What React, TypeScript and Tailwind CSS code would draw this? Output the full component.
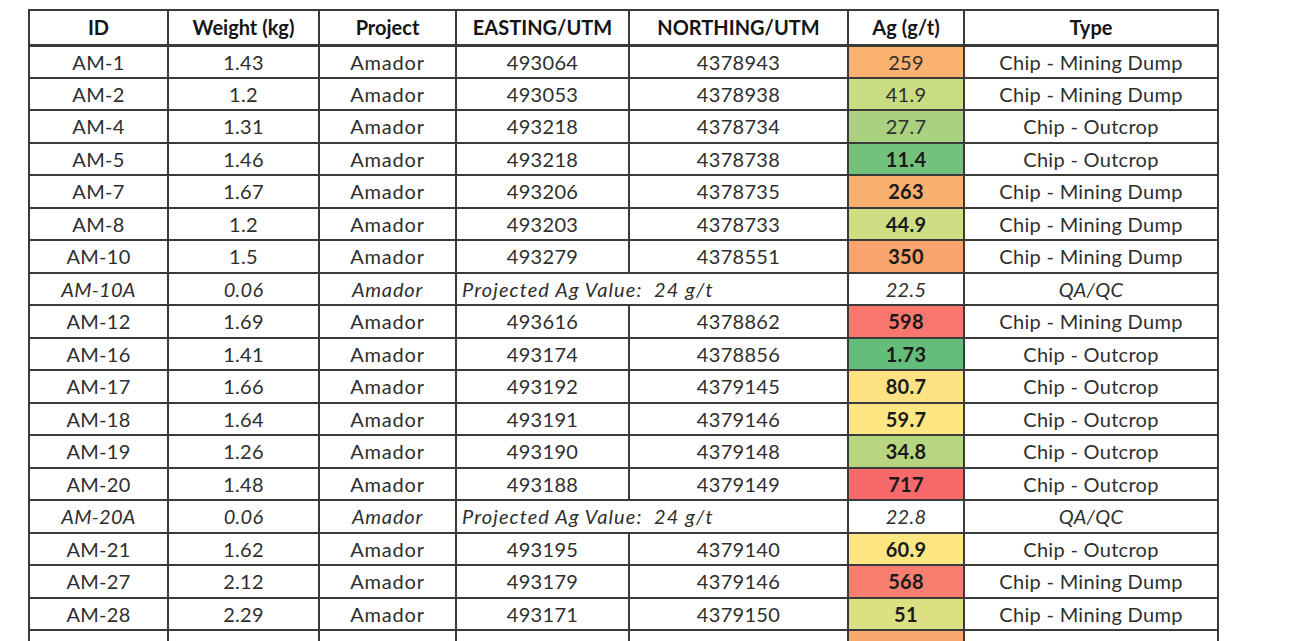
type Row = {
  id: string;
  weight: string;
  easting?: string;
  northing?: string;
  ag: string;
  agBg: string;
  bold?: boolean;
  type: string;
  qa?: boolean;
};

const rows: Row[] = [
  { id: "AM-1", weight: "1.43", easting: "493064", northing: "4378943", ag: "259", agBg: "bg-[#f9b26f]", type: "Chip - Mining Dump" },
  { id: "AM-2", weight: "1.2", easting: "493053", northing: "4378938", ag: "41.9", agBg: "bg-[#c9dc81]", type: "Chip - Mining Dump" },
  { id: "AM-4", weight: "1.31", easting: "493218", northing: "4378734", ag: "27.7", agBg: "bg-[#a9d17f]", type: "Chip - Outcrop" },
  { id: "AM-5", weight: "1.46", easting: "493218", northing: "4378738", ag: "11.4", agBg: "bg-[#74c17c]", bold: true, type: "Chip - Outcrop" },
  { id: "AM-7", weight: "1.67", easting: "493206", northing: "4378735", ag: "263", agBg: "bg-[#f9af6f]", bold: true, type: "Chip - Mining Dump" },
  { id: "AM-8", weight: "1.2", easting: "493203", northing: "4378733", ag: "44.9", agBg: "bg-[#cfde82]", bold: true, type: "Chip - Mining Dump" },
  { id: "AM-10", weight: "1.5", easting: "493279", northing: "4378551", ag: "350", agBg: "bg-[#f9a46d]", bold: true, type: "Chip - Mining Dump" },
  { id: "AM-10A", weight: "0.06", ag: "22.5", agBg: "bg-white", type: "QA/QC", qa: true },
  { id: "AM-12", weight: "1.69", easting: "493616", northing: "4378862", ag: "598", agBg: "bg-[#f8776e]", bold: true, type: "Chip - Mining Dump" },
  { id: "AM-16", weight: "1.41", easting: "493174", northing: "4378856", ag: "1.73", agBg: "bg-[#64be7b]", bold: true, type: "Chip - Outcrop" },
  { id: "AM-17", weight: "1.66", easting: "493192", northing: "4379145", ag: "80.7", agBg: "bg-[#fee282]", bold: true, type: "Chip - Outcrop" },
  { id: "AM-18", weight: "1.64", easting: "493191", northing: "4379146", ag: "59.7", agBg: "bg-[#fee783]", bold: true, type: "Chip - Outcrop" },
  { id: "AM-19", weight: "1.26", easting: "493190", northing: "4379148", ag: "34.8", agBg: "bg-[#b7d67f]", bold: true, type: "Chip - Outcrop" },
  { id: "AM-20", weight: "1.48", easting: "493188", northing: "4379149", ag: "717", agBg: "bg-[#f8696b]", bold: true, type: "Chip - Outcrop" },
  { id: "AM-20A", weight: "0.06", ag: "22.8", agBg: "bg-white", type: "QA/QC", qa: true },
  { id: "AM-21", weight: "1.62", easting: "493195", northing: "4379140", ag: "60.9", agBg: "bg-[#fee683]", bold: true, type: "Chip - Outcrop" },
  { id: "AM-27", weight: "2.12", easting: "493179", northing: "4379146", ag: "568", agBg: "bg-[#f87f6f]", bold: true, type: "Chip - Mining Dump" },
  { id: "AM-28", weight: "2.29", easting: "493171", northing: "4379150", ag: "51", agBg: "bg-[#dcdf82]", bold: true, type: "Chip - Mining Dump" },
];

const cell = "border-2 border-[#3a3a3a] p-0 text-center align-middle";

export default function App() {
  return (
    <div className="h-[641px] overflow-hidden bg-white pl-[28px] pt-[9px] font-['Lato',sans-serif] text-[20px] leading-none tracking-[0.3px] text-[#2e2e2e]">
      <table className="w-[1189px] table-fixed border-collapse">
        <colgroup>
          <col className="w-[139px]" />
          <col className="w-[151px]" />
          <col className="w-[137px]" />
          <col className="w-[173px]" />
          <col className="w-[219px]" />
          <col className="w-[116px]" />
          <col className="w-[254px]" />
        </colgroup>
        <thead>
          <tr className="h-[35px] font-bold tracking-normal text-[#151515]">
            <th className={`${cell} border-b-[3px]`}>ID</th>
            <th className={`${cell} border-b-[3px]`}>Weight (kg)</th>
            <th className={`${cell} border-b-[3px]`}>Project</th>
            <th className={`${cell} border-b-[3px]`}>EASTING/UTM</th>
            <th className={`${cell} border-b-[3px]`}>NORTHING/UTM</th>
            <th className={`${cell} border-b-[3px]`}>Ag (g/t)</th>
            <th className={`${cell} border-b-[3px]`}>Type</th>
          </tr>
        </thead>
        <tbody>
          {rows.map((r) => (
            <tr key={r.id} className={`h-[32.5px] ${r.qa ? "italic" : ""}`}>
              <td className={cell}>{r.id}</td>
              <td className={cell}>{r.weight}</td>
              <td className={`${cell} tracking-[0.8px]`}>Amador</td>
              {r.qa ? (
                <td colSpan={2} className={`${cell} pl-[5px] text-left tracking-[1.1px]`}>
                  Projected Ag Value:&nbsp; 24 g/t
                </td>
              ) : (
                <>
                  <td className={cell}>{r.easting}</td>
                  <td className={cell}>{r.northing}</td>
                </>
              )}
              <td className={`${cell} ${r.agBg} ${r.bold ? "font-bold text-[#1a1a1a]" : ""}`}>{r.ag}</td>
              <td className={cell}>{r.type}</td>
            </tr>
          ))}
          <tr className="h-[32.5px]">
            <td className={cell}></td>
            <td className={cell}></td>
            <td className={cell}></td>
            <td className={cell}></td>
            <td className={cell}></td>
            <td className={`${cell} bg-[#f9a86e]`}></td>
            <td className={cell}></td>
          </tr>
        </tbody>
      </table>
    </div>
  );
}
